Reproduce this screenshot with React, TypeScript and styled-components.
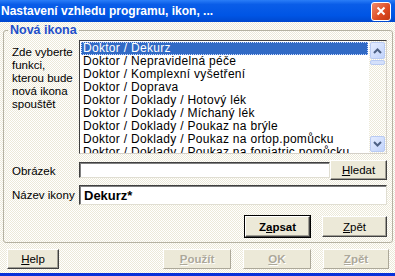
import React from "react";
import styled, { createGlobalStyle, css } from "styled-components";

const Global = createGlobalStyle`
  html, body { margin: 0; padding: 0; }
  body { font-family: "Liberation Sans", Arial, sans-serif; font-size: 11px; color: #000; }
  * { box-sizing: border-box; }
`;

const Window = styled.div`
  width: 395px;
  height: 276px;
  display: flex;
  flex-direction: column;
  background-color: #ece9d8;
  background-image: repeating-conic-gradient(#ffffff 0 25%, #ece9d8 0 50%);
  background-size: 2px 2px;
  overflow: hidden;
`;

const TitleBar = styled.div`
  height: 22px;
  flex: none;
  display: flex;
  align-items: center;
  justify-content: space-between;
  padding: 0 3px 0 1px;
  background: linear-gradient(#2a7df7 0%, #0a5de8 20%, #0055e5 70%, #0048cf 100%);
`;

const Title = styled.span`
  color: #fff;
  font-weight: bold;
  font-size: 12px;
  white-space: nowrap;
`;

const CloseBtn = styled.div`
  width: 20px;
  height: 19px;
  border: 1px solid #fff;
  border-radius: 3px;
  background: linear-gradient(135deg, #f08a6c, #dd4a22 60%, #c33812);
  display: flex;
  align-items: center;
  justify-content: center;
  margin-right: 1px;
`;

const Body = styled.div`
  flex: 1;
  display: flex;
  flex-direction: column;
  padding: 1px 3px 0 3px;
`;

const Group = styled.fieldset`
  margin: 0;
  height: 220px;
  border: 1px solid #b5b2a2;
  border-radius: 3px;
  padding: 1px 5px 0 9px;
  display: flex;
  flex-direction: column;
`;

const Legend = styled.legend`
  color: #1e4fc9;
  font-weight: bold;
  font-size: 12.5px;
  padding: 0 2px;
  margin-left: -5px;
  line-height: 15px;
`;

const Row = styled.div<{ $mt?: number }>`
  display: flex;
  align-items: flex-start;
  margin-top: ${(p) => p.$mt ?? 0}px;
`;

const SideLabel = styled.div<{ $pt?: number }>`
  width: 66px;
  flex: none;
  line-height: 13px;
  font-size: 11.5px;
  margin-left: -1px;
  padding-top: ${(p) => p.$pt ?? 0}px;
`;

const ListBox = styled.div`
  width: 308px;
  height: 114px;
  margin-left: 1px;
  display: flex;
  background: #fff;
  border: 1px solid;
  border-top-color: #404040;
  border-left-color: #404040;
  border-right-color: #d4d0c8;
  border-bottom-color: #d4d0c8;
  overflow: hidden;
`;

const Items = styled.div`
  flex: 1;
  padding: 1px 1px 0 1px;
  overflow: hidden;
  font-size: 12px;
  letter-spacing: 0.3px;
`;

const Item = styled.div<{ $sel?: boolean }>`
  height: 13px;
  line-height: 13px;
  padding-left: 2px;
  white-space: nowrap;
  ${(p) =>
    p.$sel &&
    css`
      background: #316ac5;
      color: #fff;
      outline: 1px dotted #c8d8ff;
      outline-offset: -1px;
    `}
`;

const ScrollBar = styled.div`
  width: 17px;
  flex: none;
  display: flex;
  flex-direction: column;
  background-color: #f4f3ee;
  background-image: repeating-conic-gradient(#ffffff 0 25%, #ece9d8 0 50%);
  background-size: 2px 2px;
  padding: 1px 1px;
`;

const ScrollBtn = styled.div<{ $h: number }>`
  height: ${(p) => p.$h}px;
  border: 1px solid #b9cbf3;
  border-radius: 2px;
  background: linear-gradient(135deg, #e4ecff, #c1d3fb);
  display: flex;
  align-items: center;
  justify-content: center;
`;

const Thumb = styled.div`
  height: 5px;
  margin-top: 1px;
  border: 1px solid #b9cbf3;
  border-radius: 2px;
  background: #d4e0fb;
`;

const Track = styled.div`
  flex: 1;
`;

const TextInput = styled.div<{ $w: number; $h: number; $bold?: boolean }>`
  width: ${(p) => p.$w}px;
  height: ${(p) => p.$h}px;
  margin-left: 1px;
  background: #fff;
  border: 1px solid;
  border-top-color: #404040;
  border-left-color: #404040;
  border-right-color: #e0ded2;
  border-bottom-color: #e0ded2;
  box-shadow: inset 1px 1px 0 #808080;
  padding-left: 4px;
  display: flex;
  align-items: center;
  ${(p) =>
    p.$bold &&
    css`
      font-weight: bold;
      font-size: 13px;
    `}
`;

const Button = styled.div<{ $w: number; $h?: number; $def?: boolean; $dis?: boolean; $ml?: number }>`
  width: ${(p) => p.$w}px;
  height: ${(p) => p.$h ?? 20}px;
  margin-left: ${(p) => p.$ml ?? 0}px;
  flex: none;
  display: flex;
  align-items: center;
  justify-content: center;
  background: #ece9d8;
  border: 1px solid;
  border-top-color: #ffffff;
  border-left-color: #ffffff;
  border-right-color: #404040;
  border-bottom-color: #404040;
  box-shadow: inset -1px -1px 0 #a09e94;
  font-size: 11.5px;
  ${(p) =>
    p.$def &&
    css`
      outline: 1px solid #000;
      outline-offset: 0;
      font-weight: bold;
    `}
  ${(p) =>
    p.$dis &&
    css`
      color: #aca899;
      font-weight: bold;
      text-shadow: 1px 1px 0 #fff;
      border-right-color: #aca899;
      border-bottom-color: #aca899;
      box-shadow: none;
    `}
  u { text-decoration: underline; }
`;

const ButtonRow = styled.div`
  display: flex;
  justify-content: flex-end;
  gap: 12px;
  margin-top: 11px;
`;

const BottomRow = styled.div`
  display: flex;
  align-items: center;
  margin-top: 6px;
  padding-left: 4px;
  padding-right: 3px;
  gap: 12px;
`;

const Spacer = styled.div`
  flex: 1;
`;

const BottomEdge = styled.div`
  height: 3px;
  flex: none;
  margin-top: auto;
  background: #0831d9;
`;

const items = [
  "Doktor / Dekurz",
  "Doktor / Nepravidelná péče",
  "Doktor / Komplexní vyšetření",
  "Doktor / Doprava",
  "Doktor / Doklady / Hotový lék",
  "Doktor / Doklady / Míchaný lék",
  "Doktor / Doklady / Poukaz na brýle",
  "Doktor / Doklady / Poukaz na ortop.pomůcku",
  "Doktor / Doklady / Poukaz na foniatric.pomůcku",
];

const Arrow = ({ up }: { up?: boolean }) => (
  <svg width="9" height="6" viewBox="0 0 9 6">
    <path
      d={up ? "M1 5 L4.5 1.5 L8 5" : "M1 1 L4.5 4.5 L8 1"}
      fill="none"
      stroke="#4d6185"
      strokeWidth="2"
    />
  </svg>
);

export default function App() {
  return (
    <Window>
      <Global />
      <TitleBar>
        <Title>Nastavení vzhledu programu, ikon, ...</Title>
        <CloseBtn>
          <svg width="10" height="10" viewBox="0 0 10 10">
            <path d="M1.5 1.5 L8.5 8.5 M8.5 1.5 L1.5 8.5" stroke="#fff" strokeWidth="2" />
          </svg>
        </CloseBtn>
      </TitleBar>
      <Body>
        <Group>
          <Legend>Nová ikona</Legend>
          <Row $mt={1}>
            <SideLabel $pt={6}>
              Zde vyberte
              <br />
              funkci,
              <br />
              kterou bude
              <br />
              nová ikona
              <br />
              spouštět
            </SideLabel>
            <ListBox>
              <Items>
                {items.map((t, i) => (
                  <Item key={t} $sel={i === 0}>
                    {t}
                  </Item>
                ))}
              </Items>
              <ScrollBar>
                <ScrollBtn $h={17}>
                  <Arrow up />
                </ScrollBtn>
                <Thumb />
                <Track />
                <ScrollBtn $h={16}>
                  <Arrow />
                </ScrollBtn>
              </ScrollBar>
            </ListBox>
          </Row>
          <Row $mt={6}>
            <SideLabel $pt={5}>Obrázek</SideLabel>
            <TextInput $w={251} $h={16} style={{ marginTop: 2 }} />
            <Button $w={57} $h={20}>
              <span>
                <u>H</u>ledat
              </span>
            </Button>
          </Row>
          <Row $mt={5}>
            <SideLabel $pt={4}>Název ikony</SideLabel>
            <TextInput $w={308} $h={20} $bold>
              Dekurz*
            </TextInput>
          </Row>
          <ButtonRow>
            <Button $w={65} $h={21} $def>
              <span>
                Z<u>a</u>psat
              </span>
            </Button>
            <Button $w={65} $h={21}>
              <span>
                <u>Z</u>pět
              </span>
            </Button>
          </ButtonRow>
        </Group>
        <BottomRow>
          <Button $w={52}>
            <span>
              <u>H</u>elp
            </span>
          </Button>
          <Spacer />
          <Button $w={68} $dis>
            <span>
              <u>P</u>oužít
            </span>
          </Button>
          <Button $w={68} $dis>
            <span>
              <u>O</u>K
            </span>
          </Button>
          <Button $w={66} $dis>
            <span>
              <u>Z</u>pět
            </span>
          </Button>
        </BottomRow>
      </Body>
      <BottomEdge />
    </Window>
  );
}
